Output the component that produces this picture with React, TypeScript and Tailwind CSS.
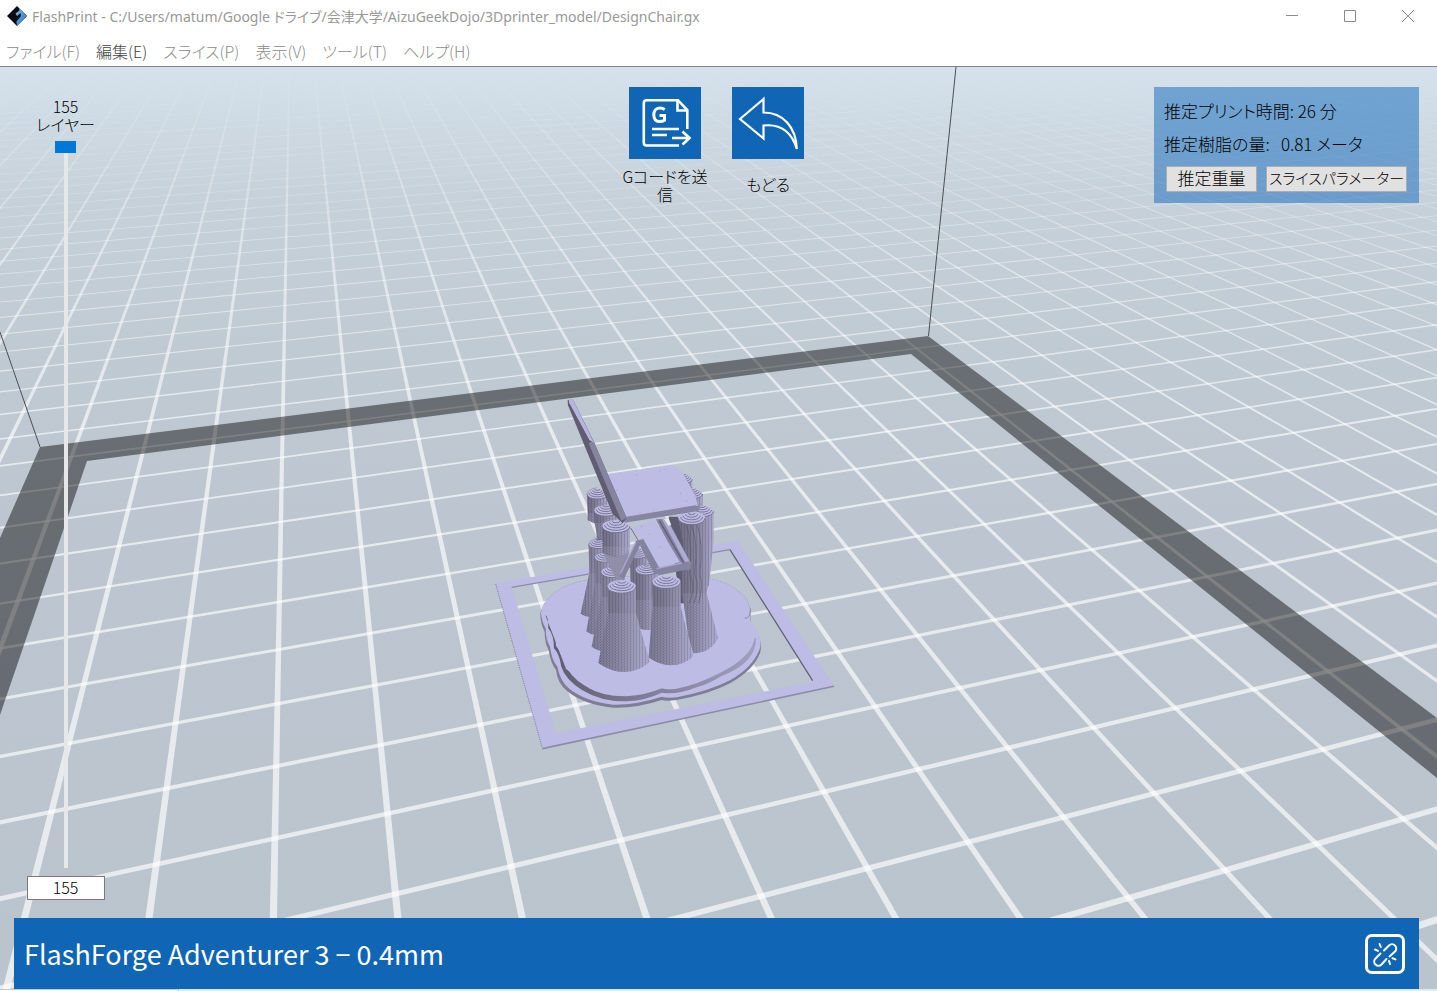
import React, { useState } from "react";

/* ---------- build-plate projection ---------- */

type Pt = [number, number];

function project(i: number, j: number): Pt {
  const w = 1 + 0.01896 * i - 0.0583 * j;
  return [(953.5 + 89.77 * i - 17.1 * j) / w, (575.7 - 2.675 * i + 8.18 * j) / w];
}

const HALF = 0.029;
const fmt = (pts: Pt[]) => "M" + pts.map((p) => p[0].toFixed(2) + " " + p[1].toFixed(2)).join("L") + "Z";

function columnLines() {
  let d = "";
  for (let i = -40; i <= 130; i++) {
    const near = (0.7 + 0.01896 * i) / 0.0583;
    d += fmt([project(i - HALF, -100), project(i + HALF, -100), project(i + HALF, near), project(i - HALF, near)]);
  }
  return d;
}

function rowLines() {
  let d = "";
  for (let j = -100; j <= 20; j++) {
    const near = Math.max(-60, (-0.7 + 0.0583 * j) / 0.01896);
    d += fmt([project(near, j - HALF), project(140, j - HALF), project(140, j + HALF), project(near, j + HALF)]);
  }
  return d;
}

const COLUMNS = columnLines();
const ROWS = rowLines();

/* ---------- support pillars ---------- */

type PillarProps = { cx: number; top: number; rx: number; bx: number; bottom: number; brx: number; neck: number };

function Pillar({ cx, top, rx, bx, bottom, brx, neck }: PillarProps) {
  const ry = rx * 0.46;
  const body =
    `M${cx - rx} ${top}L${cx - rx + 2} ${neck}L${bx - brx} ${bottom - brx * 0.35}` +
    `Q${bx - brx * 0.5} ${bottom} ${bx} ${bottom}Q${bx + brx * 0.6} ${bottom} ${bx + brx} ${bottom - brx * 0.4}` +
    `L${cx + rx} ${neck}L${cx + rx} ${top}Z`;
  return (
    <g>
      <path d={body} fill="url(#pillar)" />
      <path d={body} fill="url(#ribs)" />
      <clipPath id={`cone-${cx}-${top}`}>
        <rect x={bx - 120} y={neck} width="240" height="400" />
      </clipPath>
      <path d={body} fill="url(#weave)" clipPath={`url(#cone-${cx}-${top})`} />
      <ellipse cx={cx} cy={top} rx={rx} ry={ry} fill="#bdbbe3" />
      {[1, 0.82, 0.64, 0.46, 0.28].map((k, n) => (
        <path
          key={k}
          d={`M${cx - rx * k} ${top - n * 4}A${rx * k} ${ry * k} 0 0 0 ${cx + rx * k} ${top - n * 4}`}
          fill="none"
          stroke="#716e87"
          strokeWidth="2.6"
        />
      ))}
      <path d={`M${cx - rx} ${top}Q${cx - rx} ${top - ry} ${cx} ${top - ry - 6}`} fill="none" stroke="#8f8ca8" strokeWidth="2" />
    </g>
  );
}

function ChairModel() {
  return (
    <g transform="translate(480 390) scale(.3333)">
      {/* skirt */}
      <path
        fillRule="evenodd"
        fill="#bdbce4"
        d="M47 580L773 452L1062 888L187 1074ZM95 592L228 1030L1000 875L750 478Z"
      />
      <path d="M187 1076L1062 889" stroke="#8e8ba8" strokeWidth="5" />
      <path d="M47 582L187 1074" stroke="#7d7a95" strokeWidth="2.5" strokeDasharray="4 3" />
      <path d="M95 592L750 479" stroke="#8e8ba8" strokeWidth="4" />
      <path d="M750 479L998 872" stroke="#5f5d70" strokeWidth="3.5" />

      {/* raft, lower layer */}
      <path
        fill="#7f7c96"
        d="M181 672Q190 625 250 592Q330 556 440 560L690 566Q760 578 800 628Q818 665 811 697Q850 745 841 787Q822 840 750 880Q690 912 590 930Q560 934 545 930Q470 955 400 953Q310 944 262 904Q232 880 228 840Q212 820 206 780Q194 760 194 725Q182 705 181 672Z"
      />
      <path
        fill="#bdbce4"
        d="M183 668Q190 625 250 592Q330 556 440 560L690 566Q760 578 800 628Q816 662 811 692Q848 738 840 775Q820 832 750 871Q690 903 590 922Q560 925 545 920Q470 945 400 944Q315 935 266 895Q240 872 232 830Q215 810 210 770Q197 750 197 715Q185 695 183 668Z"
      />
      {/* raft, upper layer */}
      <path
        fill="url(#raftEdge)"
        d="M196 675Q206 680 205 715Q222 735 222 775Q238 790 244 830Q256 868 306 900Q365 936 440 934Q500 930 545 908Q590 916 650 892Q690 880 720 860Q830 820 828 745L790 740L720 846L545 895L440 918L330 896L258 836Z"
      />
      <path
        fill="#bdbce4"
        d="M190 662Q205 615 270 588Q340 560 440 562L690 568Q760 582 795 630Q808 665 795 680Q826 705 824 742Q818 800 720 849Q650 885 590 896Q560 900 545 895Q500 915 440 919Q365 920 316 888Q266 858 254 815Q240 782 228 768Q228 730 210 710Q208 680 190 662Z"
      />
      <path d="M812 655Q810 690 794 684" fill="none" stroke="#8e8ba8" strokeWidth="3" />

      {/* rear caps */}
      <Pillar cx={610} top={268} rx={27} bx={610} bottom={340} brx={27} neck={320} />
      <Pillar cx={638} top={312} rx={30} bx={638} bottom={400} brx={30} neck={360} />
      <path d="M566 380L640 380L640 640L600 640Z" fill="#5f5c71" />
      <Pillar cx={666} top={364} rx={35} bx={655} bottom={600} brx={32} neck={450} />

      {/* right front column */}
      <path
        d="M594 385L606 440Q615 480 607 530L606 600L625 740L640 790Q690 790 714 745L680 610L688 560L688 440L678 385Z"
        fill="url(#pillar)"
      />
      <path
        d="M594 385L606 440Q615 480 607 530L606 600L625 740L640 790Q690 790 714 745L680 610L688 560L688 440L678 385Z"
        fill="url(#ribs)"
      />
      <path d="M606 610L625 740L640 790Q690 790 714 745L680 610Z" fill="url(#weave)" />
      <g fill="none" stroke="#5f5c71" strokeWidth="3" opacity=".7">
        <path d="M618 400Q640 460 628 550Q650 590 628 640" />
        <path d="M634 405Q656 460 644 550Q660 590 642 640" />
        <path d="M652 405Q670 460 660 550Q670 590 656 640" />
      </g>
      <ellipse cx="635" cy="384" rx="41" ry="19" fill="#bdbbe3" />
      {[40, 33, 26, 18, 10].map((r, n) => (
        <path
          key={r}
          d={`M${635 - r} ${385 - n * 4}A${r} ${r * 0.48} 0 0 0 ${635 + r} ${385 - n * 4}`}
          fill="none"
          stroke="#716e87"
          strokeWidth="2.6"
        />
      ))}

      {/* left columns */}
      <Pillar cx={352} top={313} rx={31} bx={352} bottom={400} brx={29} neck={370} />
      <path d="M350 390L440 400L430 560L350 500Z" fill="#77748d" />
      <Pillar cx={378} top={362} rx={36} bx={382} bottom={450} brx={30} neck={400} />
      <Pillar cx={354} top={463} rx={28} bx={333} bottom={682} brx={31} neck={550} />
      <Pillar cx={374} top={503} rx={30} bx={352} bottom={735} brx={33} neck={580} />
      <Pillar cx={476} top={493} rx={26} bx={478} bottom={700} brx={30} neck={580} />
      <Pillar cx={398} top={547} rx={35} bx={375} bottom={784} brx={40} neck={620} />
      <Pillar cx={499} top={540} rx={33} bx={500} bottom={720} brx={36} neck={630} />
      <path d="M366 480L448 480L432 575L412 575Z" fill="#8a87a1" />
      <path d="M366 480L448 480L432 575L412 575Z" fill="url(#weave)" />
      <Pillar cx={408} top={409} rx={42} bx={407} bottom={500} brx={40} neck={470} />

      {/* lower step */}
      <path d="M528 388L562 386L634 522L628 542L604 536Z" fill="#8583a0" />
      <path d="M546 388L560 386L632 520L620 524Z" fill="#aeacd2" />
      <path d="M538 392L612 520" stroke="#62607a" strokeWidth="4" />
      <path d="M552 386L566 386L574 404L566 408Z" fill="#e8ecef" />
      <path d="M452 414L524 390L600 516L532 536L486 448Z" fill="#bdbce4" />
      <path d="M452 414L474 450" stroke="#716e87" strokeWidth="3" />
      <path d="M468 452L490 447L546 548L524 554L480 466L432 566L418 560Z" fill="#8582a0" />
      <path d="M468 456L422 550" stroke="#aaa8cf" strokeWidth="4" />
      <path d="M524 536L628 514L634 536L536 556Z" fill="#8583a0" />
      <path d="M530 536L606 519" stroke="#a9a7cd" strokeWidth="4" />

      {/* front columns */}
      <Pillar cx={559} top={576} rx={43} bx={573} bottom={826} brx={67} neck={650} />
      <Pillar cx={425} top={590} rx={43} bx={432} bottom={846} brx={77} neck={670} />

      {/* seat */}
      <path d="M383 252L578 225L606 244L648 322L656 362L432 397Z" fill="#bdbce4" />
      <path d="M430 382L646 346L660 350L656 363L434 398Z" fill="#8885a2" />
      <g fill="#9a98b8">
        <circle cx="470" cy="255" r="1.6" />
        <circle cx="540" cy="243" r="1.6" />
        <circle cx="556" cy="238" r="1.6" />
        <circle cx="410" cy="300" r="1.6" />
        <circle cx="602" cy="310" r="1.6" />
        <circle cx="620" cy="333" r="1.6" />
        <circle cx="480" cy="366" r="1.6" />
        <circle cx="520" cy="360" r="1.6" />
        <circle cx="484" cy="410" r="1.6" />
        <circle cx="508" cy="432" r="1.6" />
        <circle cx="540" cy="470" r="1.6" />
      </g>
      {/* backrest */}
      <path d="M263 30L279 29L342 156L440 384L428 400L398 372L314 168L264 46Z" fill="#605d73" />
      <path d="M340 152L440 384L424 392L326 160Z" fill="#8784a0" />
      <path d="M266 30L279 29L342 158L328 150L268 40Z" fill="#b7b5dd" />
      <path d="M268 42L330 158" stroke="#605d73" strokeWidth="3" strokeDasharray="5 2" />
    </g>
  );
}

function Scene() {
  return (
    <svg
      aria-hidden="true"
      viewBox="0 67 1437 922"
      preserveAspectRatio="xMidYMid slice"
      className="absolute inset-0 h-full w-full"
    >
      <defs>
        <linearGradient id="sky" gradientUnits="userSpaceOnUse" x1="0" y1="67" x2="0" y2="989">
          <stop offset="0" stopColor="#d5e1ec" />
          <stop offset=".06" stopColor="#cedae3" />
          <stop offset=".14" stopColor="#c7d1da" />
          <stop offset=".3" stopColor="#c0cad3" />
          <stop offset=".5" stopColor="#bdc6d0" />
          <stop offset="1" stopColor="#bac4cd" />
        </linearGradient>
        <linearGradient id="fade" gradientUnits="userSpaceOnUse" x1="0" y1="67" x2="0" y2="989">
          <stop offset="0" stopColor="#fff" stopOpacity="0.02" />
          <stop offset=".05" stopColor="#fff" stopOpacity=".12" />
          <stop offset=".12" stopColor="#fff" stopOpacity=".27" />
          <stop offset=".22" stopColor="#fff" stopOpacity=".48" />
          <stop offset=".4" stopColor="#fff" stopOpacity=".64" />
          <stop offset="1" stopColor="#fff" stopOpacity=".66" />
        </linearGradient>
        <linearGradient id="pillar" x1="0" y1="0" x2="1" y2="0">
          <stop offset="0" stopColor="#67647a" />
          <stop offset=".35" stopColor="#77748c" />
          <stop offset=".75" stopColor="#9a97b6" />
          <stop offset="1" stopColor="#a9a7cb" />
        </linearGradient>
        <linearGradient id="raftEdge" x1="0" y1="0" x2="1" y2="0">
          <stop offset="0" stopColor="#5b596c" />
          <stop offset=".35" stopColor="#77748c" />
          <stop offset="1" stopColor="#a19fc2" />
        </linearGradient>
        <pattern id="ribs" width="9" height="6" patternUnits="userSpaceOnUse">
          <rect width="2" height="6" fill="#565368" opacity=".4" />
          <rect x="5" width="2" height="6" fill="#c0bee6" opacity=".22" />
        </pattern>
        <pattern id="weave" width="8" height="8" patternUnits="userSpaceOnUse">
          <rect width="4" height="3" fill="#bdbbe3" opacity=".42" />
          <rect x="4" y="4" width="4" height="3" fill="#bdbbe3" opacity=".42" />
          <rect x="4" width="3" height="3" fill="#565368" opacity=".25" />
        </pattern>
      </defs>
      <rect y="0" x="-1000" width="4000" height="2000" fill="url(#sky)" />
      <path d={COLUMNS} fill="url(#fade)" />
      <path d={ROWS} fill="url(#fade)" />
      <path
        fillRule="evenodd"
        fill="#000"
        fillOpacity=".45"
        d="M40 447L928 336L1437 718L1937 1093L1937 1181L1437 778L911 354L87 461L0 715L-120 1065L-300 1260L0 538Z"
      />
      <path d="M956 67L928.500 336M0 332L40 447" fill="none" stroke="#4c4f52" strokeWidth="1" />
      <ChairModel />
    </svg>
  );
}

/* ---------- icons ---------- */

function Logo() {
  return (
    <svg viewBox="0 0 20 20" className="size-5 shrink-0" aria-hidden="true">
      <defs>
        <linearGradient id="logoBlue" x1="0" y1="0" x2="1" y2="1">
          <stop offset="0" stopColor="#7cc0ee" />
          <stop offset="1" stopColor="#1d6cb0" />
        </linearGradient>
      </defs>
      <path d="M10 0L20 10L10 20L0 10Z" fill="#0b0d12" />
      <path d="M12 2L20 10L10 20L9.500 15.500L14 10L13.500 7L10 10L8.500 7.500L12.500 4.500Z" fill="url(#logoBlue)" />
    </svg>
  );
}

function GcodeIcon() {
  return (
    <svg viewBox="0 0 72 72" className="size-18" fill="none" stroke="#fff" strokeWidth="2.6" aria-hidden="true">
      <path d="M50 58.500H17.500Q14.800 58.500 14.800 55.800V16Q14.800 13.200 17.500 13.200H49L58.300 23V42" />
      <path d="M48.500 13.500V23.500H58" />
      <path d="M35.800 22.600Q33.500 21 31 21C26.800 21 24.800 24 24.800 27.800C24.800 32 26.800 34.500 30.500 34.500Q33.500 34.500 35.500 33.200V28.500H30.500" strokeWidth="3" />
      <path d="M23 42H50M23 48H38M43 51H60M53.500 44.500L60.500 51L53.500 57.500" />
    </svg>
  );
}

function BackIcon() {
  return (
    <svg viewBox="0 0 72 72" className="size-18" fill="none" stroke="#fff" strokeWidth="2.2" aria-hidden="true">
      <path d="M8 32L31.500 12V25.500C51 25.500 64 40 64.800 62C60 46 50 36.500 31.500 38.500V51.500Z" strokeLinejoin="miter" />
    </svg>
  );
}

function BrokenLinkIcon() {
  return (
    <svg viewBox="3 3 34 34" className="size-[34px]" fill="none" stroke="#fff" strokeWidth="2" strokeLinecap="round" aria-hidden="true">
      <path d="M19 16.500L24 11.500A4.200 4.200 0 0 1 30 17.500L24.500 22.500" />
      <path d="M15.500 19.500L10.500 24.500A4.200 4.200 0 0 0 16.500 30.500L21.500 25" />
      <path d="M10 15.500L13 16.800M14.600 10L15.800 13M24 27L25 30M27.500 24.200L30.500 25.400" />
    </svg>
  );
}

/* ---------- page ---------- */

const MENU = [
  { label: "ファイル(F)" },
  { label: "編集(E)", active: true },
  { label: "スライス(P)" },
  { label: "表示(V)" },
  { label: "ツール(T)" },
  { label: "ヘルプ(H)" },
];

function TitleBar() {
  return (
    <header className="bg-white text-[#8c8c8c] [font-feature-settings:'palt']">
      <div className="flex h-8 items-center justify-between pl-[7px]">
        <div className="flex items-center gap-[5px]">
          <Logo />
          <h1 className="font-['Noto_Sans','Noto_Sans_CJK_JP',sans-serif] text-[14px] font-normal text-[#999]">
            FlashPrint - C:/Users/matum/Google ドライブ/会津大学/AizuGeekDojo/3Dprinter_model/DesignChair.gx
          </h1>
        </div>
        <div className="flex">
          <button aria-label="最小化" className="flex h-8 w-[58px] items-center justify-center">
            <svg viewBox="0 0 12 12" className="size-3" stroke="#8a8a8a" fill="none"><path d="M0 5.500H12" /></svg>
          </button>
          <button aria-label="最大化" className="flex h-8 w-[58px] items-center justify-center">
            <svg viewBox="0 0 12 12" className="size-3" stroke="#8a8a8a" fill="none"><path d="M.5 .5H11.500V11.500H.5Z" /></svg>
          </button>
          <button aria-label="閉じる" className="flex h-8 w-[58px] items-center justify-center">
            <svg viewBox="0 0 12 12" className="size-3" stroke="#8a8a8a" fill="none"><path d="M0 0L12 12M12 0L0 12" /></svg>
          </button>
        </div>
      </div>
      <nav className="flex h-[35px] items-center gap-4 border-b border-[#7f848c] pl-[6px] pt-[3px] font-['Noto_Sans_CJK_JP',sans-serif] text-[16px] leading-6 font-light">
        {MENU.map((m) => (
          <button key={m.label} className={m.active ? "text-[#444]" : "text-[#8c8c8c]"}>
            {m.label}
          </button>
        ))}
      </nav>
    </header>
  );
}

export default function App() {
  const [layer, setLayer] = useState(155);
  return (
    <div className="flex min-h-screen flex-col bg-white font-['Noto_Sans_CJK_JP',sans-serif] text-black">
      <TitleBar />
      <main className="relative flex flex-1 flex-col overflow-hidden pl-[14px] pr-[18px]">
        <Scene />
        <div className="relative flex flex-1 items-stretch pb-[18px] pt-5">
          <div className="flex flex-1">
            <div className="flex w-[103px] flex-col items-center pt-[10px]">
              <label htmlFor="layer" className="flex flex-col items-center text-[16px] leading-[18px] font-light [font-feature-settings:'palt']">
                <span>155</span>
                <span>レイヤー</span>
              </label>
              <input
                id="layer"
                type="range"
                min={1}
                max={155}
                value={layer}
                onChange={(e) => setLayer(Number(e.target.value))}
                className="mt-2 w-[21px] flex-1 appearance-none bg-[linear-gradient(#e6e8e8,#e6e8e8)] bg-[length:4px_100%] bg-center bg-no-repeat [direction:rtl] [writing-mode:vertical-lr] [&::-webkit-slider-thumb]:h-3 [&::-webkit-slider-thumb]:w-[21px] [&::-webkit-slider-thumb]:appearance-none [&::-webkit-slider-thumb]:bg-[#0078d7]"
              />
              <input
                type="text"
                aria-label="レイヤー番号"
                value={layer}
                onChange={(e) => setLayer(Number(e.target.value) || 1)}
                className="mt-2 h-6 w-[78px] border border-[#7a7a7a] bg-white pb-[2px] text-center text-[16px] font-light"
              />
            </div>
          </div>
          <div className="flex items-start gap-[17px] text-[16px] leading-[18px] font-light [font-feature-settings:'palt']">
            <button className="flex w-[86px] flex-col items-center">
              <span className="bg-[#1065b5]"><GcodeIcon /></span>
              <span className="mt-2 break-all">Gコードを送信</span>
            </button>
            <button className="flex w-[86px] flex-col items-center">
              <span className="bg-[#1065b5]"><BackIcon /></span>
              <span className="mt-4">もどる</span>
            </button>
          </div>
          <div className="flex flex-1 items-start justify-end">
            <section className="flex min-h-[116px] w-[265px] flex-col bg-[#0f68bc]/50 px-[10px] pt-[7px] text-[17px] font-light [font-feature-settings:'palt']">
              <p className="leading-[33px]">推定プリント時間: 26 分</p>
              <p className="leading-[33px] whitespace-pre">推定樹脂の量:   0.81 メータ</p>
              <div className="flex gap-[9px] pl-[2px] pt-[6px]">
                <button className="h-[26px] w-[91px] border border-[#adadad] bg-[#e1e1e1] pb-[2px] leading-[22px] whitespace-nowrap">推定重量</button>
                <button className="h-[26px] w-[141px] border border-[#adadad] bg-[#e1e1e1] pb-[2px] text-[15px] leading-[22px] whitespace-nowrap">スライスパラメーター</button>
              </div>
            </section>
          </div>
        </div>
        <footer className="relative flex h-[71px] items-center justify-between bg-[#1065b5] pl-[10px] pr-[14px] text-white">
          <p className="text-[27px] leading-9">FlashForge Adventurer 3 − 0.4mm</p>
          <button aria-label="接続" className="flex size-10 items-center justify-center rounded-[7px] border-[3px] border-white">
            <BrokenLinkIcon />
          </button>
        </footer>
      </main>
      <div className="flex h-[2px] bg-[#dfeaf1]">
        <div className="w-[179px] border-t border-r border-[#c4c8cb] bg-white" />
      </div>
    </div>
  );
}
